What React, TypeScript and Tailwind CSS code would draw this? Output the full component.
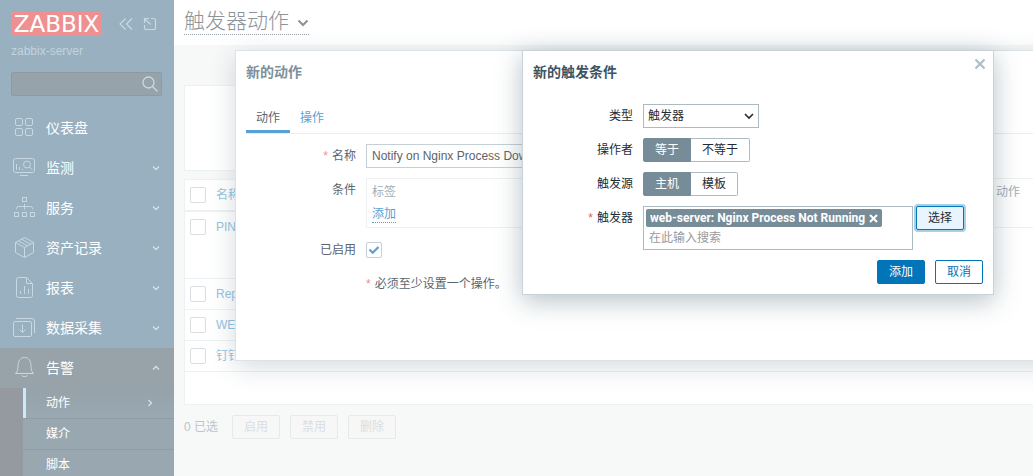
import React from 'react'

type NavEntry = {
  label: string
  icon: React.ReactNode
  expandable?: boolean
}

const navEntries: NavEntry[] = [
  {
    label: '仪表盘',
    icon: (
      <>
        <rect x="3.5" y="2.5" width="7" height="7" rx="1.5" />
        <rect x="13.5" y="2.5" width="7" height="7" rx="1.5" />
        <rect x="3.5" y="12.5" width="7" height="7" rx="1.5" />
        <rect x="13.5" y="12.5" width="7" height="7" rx="1.5" />
      </>
    ),
  },
  {
    label: '监测',
    expandable: true,
    icon: (
      <>
        <rect x="1.5" y="2.5" width="21" height="14" rx="2" />
        <circle cx="15" cy="8.5" r="3.5" />
        <path d="M17.5 11l3 3M4.5 8v6M7.5 11v3M10.5 13v1M8 19.5h8" />
      </>
    ),
  },
  {
    label: '服务',
    expandable: true,
    icon: (
      <>
        <rect x="10.5" y="1.5" width="4" height="4" />
        <rect x="2.5" y="16.5" width="4" height="4" />
        <rect x="10.5" y="16.5" width="4" height="4" />
        <rect x="18.5" y="16.5" width="4" height="4" />
        <path d="M12.5 8v5.5M4.5 13.5v-1a2 2 0 0 1 2-2h12a2 2 0 0 1 2 2v1" />
      </>
    ),
  },
  {
    label: '资产记录',
    expandable: true,
    icon: (
      <path
        strokeLinejoin="round"
        d="M12.5 1.5l9 5v10l-9 5-9-5v-10zM3.5 6.5l9 5 9-5M12.5 11.5v10M9.5 3.2l9 5M6.5 4.9l9 5"
      />
    ),
  },
  {
    label: '报表',
    expandable: true,
    icon: (
      <path
        strokeLinejoin="round"
        d="M14.5 1.5h-8a2 2 0 0 0-2 2v16a2 2 0 0 0 2 2h12a2 2 0 0 0 2-2v-12zM14.5 1.5v6h6M8.5 15v3M12.5 10v8M16.5 13v5"
      />
    ),
  },
  {
    label: '数据采集',
    expandable: true,
    icon: (
      <>
        <rect x="1.5" y="5.5" width="18" height="15" rx="1.5" />
        <path d="M4 2.5h16a2.5 2.5 0 0 1 2.5 2.5v12M10.5 8.5v8M7.5 13.5l3 3 3-3" />
      </>
    ),
  },
]

const subEntries = ['动作', '媒介', '脚本']

const actionRows = [
  { name: 'PIN', height: 'h-[67px]' },
  { name: 'Rep', height: 'h-[31px]' },
  { name: 'WE', height: 'h-[31px]' },
  { name: '钉钉', height: 'h-[31px]' },
]

function NavIcon({ children }: { children: React.ReactNode }) {
  return (
    <svg className="h-6 w-6 shrink-0 text-[#c6d9e5]" viewBox="0 0 24 24" fill="none" stroke="currentColor">
      {children}
    </svg>
  )
}

function Chevron({ d }: { d: string }) {
  return (
    <svg className="h-2 w-2 text-[#d5e2ea]" viewBox="0 0 8 8" fill="none" stroke="currentColor" strokeWidth="1.3">
      <path d={d} />
    </svg>
  )
}

function Sidebar() {
  return (
    <aside className="w-[174px] shrink-0 bg-[#98b0c0] pt-3 text-white">
      <div className="flex items-center pr-[17px] pl-[11px]">
        <a
          href="#"
          className="flex h-6 w-[91px] items-center justify-center bg-[#ee9090] font-['DejaVu_Sans'] text-[23px] leading-6"
        >
          ZABBIX
        </a>
        <button type="button" aria-label="收起" className="ml-auto text-[#c6d9e5]">
          <svg className="h-[14px] w-[14px]" viewBox="0 0 14 14" fill="none" stroke="currentColor" strokeWidth="1.2">
            <path d="M6.5 1.5L1 7l5.5 5.5M13 1.5L7.5 7l5.5 5.5" />
          </svg>
        </button>
        <button type="button" aria-label="隐藏" className="ml-2.5 text-[#c6d9e5]">
          <svg className="h-[14px] w-[14px]" viewBox="0 0 14 14" fill="none" stroke="currentColor" strokeWidth="1.2">
            <path d="M8 1.5h3a1.5 1.5 0 0 1 1.5 1.5v8a1.5 1.5 0 0 1-1.5 1.5h-8a1.5 1.5 0 0 1-1.5-1.5v-3M1.5 6v-4.5h4.5M1.5 1.5l6 6" />
          </svg>
        </button>
      </div>
      <div className="mt-1.5 px-[11px] text-xs leading-[18px] text-[#c3d3dd]">zabbix-server</div>
      <form className="mr-3 ml-[11px] mt-3 flex h-6 items-center rounded-xs border border-[#8f9ba3] bg-[#97a3aa] pr-[3px]">
        <input type="text" aria-label="搜索" className="min-w-0 flex-1 px-1 outline-none" />
        <button type="button" aria-label="搜索" className="text-[#c9dbe6]">
          <svg className="h-4 w-4" viewBox="0 0 16 16" fill="none" stroke="currentColor" strokeWidth="1.3">
            <circle cx="6.5" cy="6.5" r="5.5" />
            <path d="M10.5 10.5l5 5" />
          </svg>
        </button>
      </form>

      <nav className="mt-3">
        {navEntries.map((entry) => (
          <a key={entry.label} href="#" className="flex h-10 items-center pr-[14px] pl-3 text-sm">
            <NavIcon>{entry.icon}</NavIcon>
            <span className="ml-2.5 flex-1">{entry.label}</span>
            {entry.expandable && <Chevron d="M1 2.5l3 3 3-3" />}
          </a>
        ))}
        <a href="#" className="flex h-10 items-center bg-[#97a2a9] pr-[14px] pl-3 text-sm">
          <NavIcon>
            <path
              strokeLinejoin="round"
              d="M3.5 17.5c2-2 2.5-4 2.5-8 0-4.5 2.5-8 6.5-8s6.5 3.5 6.5 8c0 4 .5 6 2.5 8zM9.5 19.5c.8 1.4 5.2 1.4 6 0"
            />
          </NavIcon>
          <span className="ml-2.5 flex-1">告警</span>
          <Chevron d="M1 5.5l3-3 3 3" />
        </a>
        <ul className="bg-[#959aa0] pl-[23px] text-xs">
          {subEntries.map((label, i) => (
            <li key={label} className="border-b border-[#8f9ca4]">
              <a
                href="#"
                className={
                  i === 0
                    ? 'flex h-[30px] items-center border-l-3 border-[#cbe9fb] bg-linear-to-b from-[#96a2aa] to-[#99a8b1] pr-5 pl-5'
                    : 'flex h-[30px] items-center bg-[#99a8b0] pl-[23px]'
                }
              >
                <span className="flex-1">{label}</span>
                {i === 0 && <Chevron d="M2.5 1l3 3-3 3" />}
              </a>
            </li>
          ))}
        </ul>
      </nav>
    </aside>
  )
}

function RowCheckbox({ label }: { label: string }) {
  return (
    <input
      type="checkbox"
      aria-label={label}
      className="block h-4 w-4 appearance-none rounded-xs border border-[#d8dee2] bg-white"
    />
  )
}

function ActionList() {
  return (
    <main className="min-w-0 flex-1 bg-[#f7f8f8]">
      <header className="flex h-[45px] bg-white px-2.5">
        <h1 className="mt-2">
          <button
            type="button"
            className="flex h-[27px] items-center gap-2 border-b border-dotted border-[#98a1a6] text-[21px] font-light text-[#8c9499]"
          >
            触发器动作
            <svg className="mt-1 h-3 w-3" viewBox="0 0 12 12" fill="none" stroke="currentColor" strokeWidth="2">
              <path d="M1.5 3.5L6 8l4.5-4.5" />
            </svg>
          </button>
        </h1>
      </header>

      <div className="pl-2.5 text-xs">
        <div className="mt-10 h-[86px] border border-r-0 border-[#eef1f2] bg-white" />

        <div className="mt-2 border border-r-0 border-[#eef1f2] bg-white pb-8">
          <table className="w-full text-left">
            <thead>
              <tr className="h-[31px] border-b-2 border-[#eef1f2] align-top">
                <th className="w-[26px] pt-[7px] pl-[5px]">
                  <RowCheckbox label="全选" />
                </th>
                <th className="pt-[7px] pl-[5px] font-normal text-[#94c3e0]">名称</th>
              </tr>
            </thead>
            <tbody>
              {actionRows.map((row) => (
                <tr key={row.name} className={`${row.height} border-b border-[#eef1f2] align-top`}>
                  <td className="pt-[7px] pl-[5px]">
                    <RowCheckbox label={row.name} />
                  </td>
                  <td className="pt-[7px] pl-[5px]">
                    <a href="#" className="text-[#94c3e0]">
                      {row.name}
                    </a>
                  </td>
                </tr>
              ))}
            </tbody>
          </table>
        </div>

        <div className="mt-2.5 flex items-center gap-2.5 text-[#bcc5cb]">
          <span className="mr-1">0 已选</span>
          {['启用', '禁用', '删除'].map((label) => (
            <button
              key={label}
              type="button"
              disabled
              className="h-6 rounded-xs border border-[#e6eaec] bg-[#f7f7f7] px-[11px] text-[#d9dee1]"
            >
              {label}
            </button>
          ))}
        </div>
      </div>
    </main>
  )
}

function NewActionDialog() {
  return (
    <div
      role="dialog"
      aria-label="新的动作"
      className="absolute top-[50px] -right-8 left-[235px] border border-[#dce2e5] bg-white px-2.5 pt-[11px] pb-16 text-xs text-[#5b656b] shadow-[0_6px_24px_rgba(50,80,95,0.2)]"
    >
      <h2 className="text-sm font-bold text-[#7d909b]">新的动作</h2>
      <div className="mt-5 flex border-b border-[#eaedee]">
        <button type="button" className="h-[31px] border-b-3 border-[#57a2d3] px-2.5 pt-1">
          动作
        </button>
        <button type="button" className="h-[31px] border-b-3 border-transparent px-2.5 pt-1 text-[#57a2d3]">
          操作
        </button>
      </div>

      <div className="mt-2.5 grid grid-cols-[110px_1fr] gap-x-2.5 gap-y-2.5">
        <label htmlFor="action-name" className="text-right leading-6">
          <span className="mr-1 text-[#ee8f8f]">*</span>名称
        </label>
        <input
          id="action-name"
          type="text"
          defaultValue="Notify on Nginx Process Down"
          className="h-6 w-full max-w-[453px] border border-[#c5d0d5] px-[5px] outline-none"
        />
        <span className="text-right leading-6">条件</span>
        <div className="h-[50px] border border-[#eef0f1] px-[5px] pt-0.5">
          <table className="w-full text-left leading-[22px]">
            <thead>
              <tr>
                <th className="font-normal text-[#a3aeb5]">标签</th>
                <th className="w-[52px] font-normal text-[#a3aeb5]">动作</th>
              </tr>
            </thead>
            <tbody>
              <tr>
                <td colSpan={2}>
                  <button
                    type="button"
                    className="border-b border-dotted border-[#57a2d3] leading-4 text-[#57a2d3]"
                  >
                    添加
                  </button>
                </td>
              </tr>
            </tbody>
          </table>
        </div>
        <label htmlFor="action-enabled" className="text-right leading-6">
          已启用
        </label>
        <div className="grid h-6 grid-cols-[16px] items-center">
          <input
            id="action-enabled"
            type="checkbox"
            defaultChecked
            className="col-start-1 row-start-1 h-4 w-4 appearance-none rounded-xs border border-[#c5d0d5]"
          />
          <svg
            className="pointer-events-none col-start-1 row-start-1 h-4 w-4 text-[#57a2d3]"
            viewBox="0 0 16 16"
            fill="none"
            stroke="currentColor"
            strokeWidth="2.2"
          >
            <path d="M3.5 7.5l3.2 3.2 5.8-5.7" />
          </svg>
        </div>
        <p className="col-start-2 leading-6">
          <span className="mr-1 text-[#ee8f8f]">*</span>必须至少设置一个操作。
        </p>
      </div>
    </div>
  )
}

function Segmented({ name, options }: { name: string; options: string[] }) {
  return (
    <div className="flex h-6 text-[#1f2c33]">
      {options.map((option, i) => (
        <label
          key={option}
          className="flex items-center border border-l-0 border-[#acbbc2] px-[11px] first:rounded-l-xs first:border-l last:rounded-r-xs has-checked:border-[#768d99] has-checked:bg-[#768d99] has-checked:text-white"
        >
          <input type="radio" name={name} defaultChecked={i === 0} className="sr-only" />
          {option}
        </label>
      ))}
    </div>
  )
}

function NewConditionDialog() {
  return (
    <div
      role="dialog"
      aria-label="新的触发条件"
      className="absolute top-[50px] left-[522px] w-[472px] border border-[#c8d2d7] bg-white px-2.5 pt-[11px] pb-2.5 text-xs text-[#1f2c33] shadow-[0_6px_24px_rgba(50,80,95,0.35)]"
    >
      <div className="flex items-start justify-between">
        <h2 className="text-sm font-bold text-[#3c5563]">新的触发条件</h2>
        <button type="button" aria-label="关闭" className="-mt-2 -mr-[7px] p-1 text-[#b0bec5]">
          <svg className="h-3 w-3" viewBox="0 0 12 12" fill="none" stroke="currentColor" strokeWidth="2.2">
            <path d="M1.5 1.5l9 9M10.5 1.5l-9 9" />
          </svg>
        </button>
      </div>

      <div className="mt-[22px] grid grid-cols-[100px_1fr] gap-2.5">
        <label htmlFor="condition-type" className="text-right leading-6">
          类型
        </label>
        <div className="grid w-[116px] items-center">
          <select
            id="condition-type"
            className="col-start-1 row-start-1 h-6 appearance-none border border-[#acbbc2] bg-white px-1 outline-none"
          >
            <option>触发器</option>
          </select>
          <svg
            className="pointer-events-none col-start-1 row-start-1 mr-[5px] h-2.5 w-2.5 justify-self-end"
            viewBox="0 0 10 10"
            fill="none"
            stroke="currentColor"
            strokeWidth="1.6"
          >
            <path d="M1 3l4 4 4-4" />
          </svg>
        </div>
        <span className="text-right leading-6">操作者</span>
        <Segmented name="operator" options={['等于', '不等于']} />
        <span className="text-right leading-6">触发源</span>
        <Segmented name="source" options={['主机', '模板']} />
        <label htmlFor="condition-trigger" className="text-right leading-6">
          <span className="mr-1 text-[#e45959]">*</span>触发器
        </label>
        <div className="flex items-start gap-[3px]">
          <div className="h-11 w-[270px] border border-[#acbbc2] p-0.5">
            <div className="flex h-[18px] w-fit items-center gap-1 rounded-xs bg-[#768d99] px-1 font-['Roboto',sans-serif] font-bold text-white">
              web-server: Nginx Process Not Running
              <button type="button" aria-label="移除">
                <svg className="h-[9px] w-[9px]" viewBox="0 0 9 9" fill="none" stroke="currentColor" strokeWidth="2">
                  <path d="M1 1l7 7M8 1L1 8" />
                </svg>
              </button>
            </div>
            <input
              id="condition-trigger"
              type="text"
              placeholder="在此输入搜索"
              className="block h-[22px] w-full px-[3px] outline-none placeholder:text-[#9a9a9a]"
            />
          </div>
          <button
            type="button"
            className="h-6 rounded-xs border border-[#0275b8] bg-[#e8f5ff] px-[11px] shadow-[0_0_0_2px_rgba(2,117,184,0.35)]"
          >
            选择
          </button>
        </div>
      </div>

      <div className="mt-2.5 flex justify-end gap-2.5">
        <button type="button" className="h-6 rounded-xs border border-[#0275b8] bg-[#0275b8] px-[11px] text-white">
          添加
        </button>
        <button type="button" className="h-6 rounded-xs border border-[#0275b8] bg-white px-[11px] text-[#0275b8]">
          取消
        </button>
      </div>
    </div>
  )
}

export default function App() {
  return (
    <div className="relative flex h-screen overflow-hidden font-['Liberation_Sans','Noto_Sans_CJK_SC',sans-serif]">
      <Sidebar />
      <ActionList />
      <NewActionDialog />
      <NewConditionDialog />
    </div>
  )
}
